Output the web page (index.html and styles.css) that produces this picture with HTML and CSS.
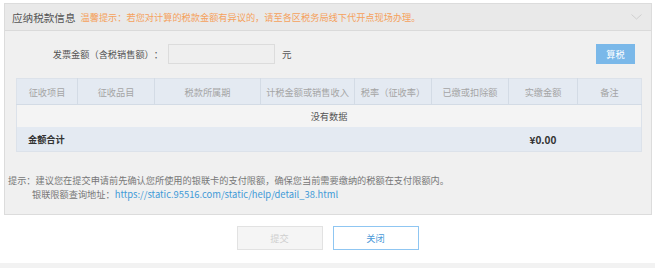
FILE: index.html
```html
<!DOCTYPE html>
<html lang="zh-CN">
<head>
  <meta charset="UTF-8">
  <title>应纳税款信息</title>
  <link rel="stylesheet" href="styles.css">
</head>
<body>
  <div class="panel">
    <div class="panel-head">
      <span class="panel-title">应纳税款信息</span>
      <span class="panel-tip">温馨提示：若您对计算的税款金额有异议的，请至各区税务局线下代开点现场办理。</span>
      <svg class="chevron" width="11" height="6" viewBox="0 0 11 6">
        <polyline points="0.5,0.5 5.5,5 10.5,0.5" fill="none" stroke="#cfcfcf" stroke-width="1"/>
      </svg>
    </div>

    <div class="form-row">
      <label class="form-label">发票金额（含税销售额）：</label>
      <input class="form-input" type="text">
      <span class="unit">元</span>
      <button class="btn btn-calc">算税</button>
    </div>

    <table class="tax-table">
      <colgroup>
        <col style="width:61px"><col style="width:77px"><col style="width:106px"><col style="width:94px">
        <col style="width:77px"><col style="width:77px"><col style="width:69px"><col style="width:64px">
      </colgroup>
      <thead>
        <tr>
          <th>征收项目</th>
          <th>征收品目</th>
          <th>税款所属期</th>
          <th>计税金额或销售收入</th>
          <th>税率（征收率）</th>
          <th>已缴或扣除额</th>
          <th>实缴金额</th>
          <th>备注</th>
        </tr>
      </thead>
      <tbody>
        <tr class="empty-row">
          <td colspan="8">没有数据</td>
        </tr>
        <tr class="total-row">
          <td colspan="6" class="total-label">金额合计</td>
          <td class="total-value">¥0.00</td>
          <td></td>
        </tr>
      </tbody>
    </table>

    <div class="tips">
      <p>提示：建议您在提交申请前先确认您所使用的银联卡的支付限额，确保您当前需要缴纳的税额在支付限额内。</p>
      <p class="indent">银联限额查询地址：<a href="#">https://static.95516.com/static/help/detail_38.html</a></p>
    </div>
  </div>

  <div class="actions">
    <button class="btn btn-submit" disabled>提交</button>
    <button class="btn btn-close">关闭</button>
  </div>

  <div class="footer-strip"></div>
</body>
</html>
```

FILE: styles.css
```css
body {
  margin: 0;
  padding: 0;
  background-color: #fff;
  font-family: "Noto Sans CJK SC", "Liberation Sans", sans-serif;
  font-size: 9.2px;
  color: #555;
  text-spacing-trim: space-all;
}
.panel {
  margin: 3px 3px 0 4px;
  border: 1px solid #dcdcdc;
  background-color: #f0f0f0;
}
.panel-head {
  display: flex;
  align-items: center;
  height: 26px;
  padding: 0 9px 0 7px;
  background-color: #e9e9e9;
  border-bottom: 1px solid #dadada;
}
.panel-title {
  font-size: 10.6px;
  color: #555;
}
.panel-tip {
  margin-left: 5px;
  color: #f5a15c;
}
.chevron {
  margin-left: auto;
}
.form-row {
  display: flex;
  align-items: center;
  height: 20px;
  padding: 13px 16px 0 0;
}
.form-label {
  width: 158px;
  text-align: right;
  color: #555;
}
.form-input {
  width: 107px;
  height: 20px;
  box-sizing: border-box;
  margin: 0 0 0 5px;
  border: 1px solid #dcdcdc;
  background-color: #efefef;
}
.unit {
  margin-left: 7px;
  font-size: 9.5px;
}
.btn {
  font-family: inherit;
  font-size: 9.2px;
  cursor: pointer;
  padding: 0;
}
.btn-calc {
  margin-left: auto;
  width: 39px;
  height: 20px;
  border: none;
  background-color: #7ab8e9;
  color: #fff;
}
.tax-table {
  width: 625px;
  margin: 14px 0 0 11px;
  border-collapse: collapse;
  table-layout: fixed;
  border: 1px solid #dce2ea;
}
.tax-table th {
  height: 25px;
  padding: 0;
  font-weight: normal;
  color: #a5a5a5;
  background-color: #e4eaf2;
  border-right: 1px solid #d3dbe5;
  border-bottom: 1px solid #d3dbe5;
}
.tax-table th:last-child {
  border-right: none;
}
.empty-row td {
  height: 22px;
  padding: 0;
  text-align: center;
  background-color: #f4f4f4;
  color: #555;
}
.total-row td {
  height: 24px;
  padding: 0;
  background-color: #e4eaf2;
  font-weight: bold;
  color: #333;
}
.total-label {
  padding-left: 11px !important;
}
.total-value {
  text-align: center;
  font-size: 10px;
}
.tips {
  padding: 21px 0 13px 3px;
  color: #777;
}
.tips p {
  margin: 0;
  line-height: 14px;
}
.tips .indent {
  padding-left: 24px;
}
.tips a {
  color: #3f9ad7;
  text-decoration: none;
  font-size: 9.4px;
}
.actions {
  display: flex;
  justify-content: center;
  gap: 10px;
  margin-top: 11px;
}
.actions .btn {
  width: 86px;
  height: 24px;
  background-color: #fff;
}
.btn-submit {
  border: 1px solid #e2e2e2;
  background-color: #f5f5f5 !important;
  color: #cfcfcf;
}
.btn-close {
  border: 1px solid #8fc6f2;
  color: #4a9ad8;
}
.footer-strip {
  height: 8px;
  margin-top: 13px;
  background-color: #f2f2f2;
}
```
